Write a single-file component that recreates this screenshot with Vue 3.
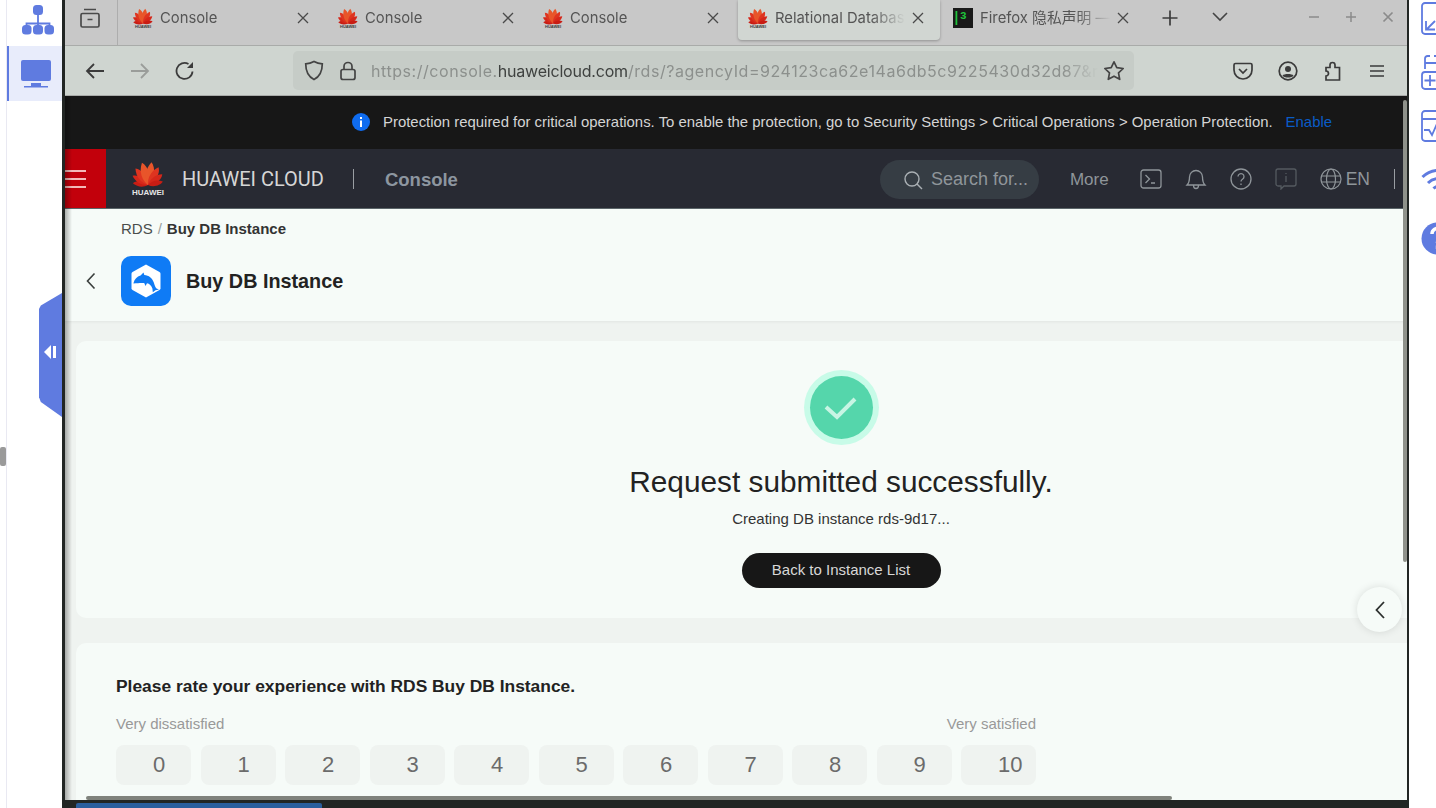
<template>
  <div class="desktop">
    <!-- left rail -->
    <aside class="rail-left">
      <div class="rail-strip"><span class="strip-thumb"></span></div>
      <div class="rail-items">
        <div class="rail-item org">
          <svg width="34" height="34" viewBox="0 0 34 34" fill="#5f7be0">
            <rect x="12" y="2" width="10" height="10" rx="3.500" />
            <path d="M17 11v11M5.500 24v-3.500h23V24" fill="none" stroke="#5f7be0" stroke-width="1.800" />
            <rect x="1" y="22" width="9.500" height="9.500" rx="3.500" />
            <rect x="12" y="22" width="10" height="9.500" rx="3.500" />
            <rect x="23.500" y="22" width="9.500" height="9.500" rx="3.500" />
          </svg>
        </div>
        <div class="rail-item active">
          <svg width="32" height="30" viewBox="0 0 32 30" fill="#5f7be0">
            <rect x="1" y="1" width="30" height="21" rx="2" />
            <rect x="11" y="24" width="10" height="3" />
            <rect x="4" y="27" width="24" height="1.500" />
          </svg>
        </div>
      </div>
    </aside>
    <div class="handle">
      <svg width="12" height="14" viewBox="0 0 12 14" fill="#fff">
        <path d="M7 0v14L0 7z" />
        <rect x="9" y="1" width="3" height="12" />
      </svg>
    </div>

    <!-- browser -->
    <div class="center">
      <div class="window">
        <div class="tabbar">
          <div class="archive">
            <svg width="22" height="22" viewBox="0 0 22 22" fill="none" stroke="#4a4a4a" stroke-width="1.700">
              <path d="M5 2.500h12M3.500 6.500h15A1.500 1.500 0 0 1 20 8v10.500a1.500 1.500 0 0 1-1.500 1.500h-15A1.500 1.500 0 0 1 2 18.500V8a1.500 1.500 0 0 1 1.500-1.500zM8.500 12.500h5" />
            </svg>
          </div>
          <div v-for="tab in tabs" :key="tab.key" class="tab" :class="{ selected: tab.active }">
            <svg v-if="tab.fox" class="favicon" width="20" height="20" viewBox="0 0 20 20">
              <rect width="20" height="20" fill="#1a1a1a" />
              <rect x="2.500" y="3" width="1.800" height="14" fill="#1fc23b" />
              <text x="7" y="11" font-size="11" font-weight="700" fill="#1fc23b" font-family="Liberation Mono, monospace">3</text>
            </svg>
            <div v-else class="favicon logo-small">
              <svg width="22" height="16.500" viewBox="0 0 40 30">
                <path v-for="p in petals" :key="p.a" :d="petalPath" :fill="p.c" :transform="`translate(20 28) rotate(${p.a}) scale(${p.s})`" />
              </svg>
              <span class="logo-small-text">HUAWEI</span>
            </div>
            <span class="tab-title">{{ tab.title }}</span>
            <svg class="tab-close" width="14" height="14" viewBox="0 0 14 14" stroke="#4a4a4a" stroke-width="1.300">
              <path d="M2 2l10 10M12 2L2 12" />
            </svg>
          </div>
          <svg class="tab-new" width="18" height="18" viewBox="0 0 18 18" stroke="#3c3c3c" stroke-width="1.700">
            <path d="M9 1.500v15M1.500 9h15" />
          </svg>
          <svg class="tab-list" width="18" height="12" viewBox="0 0 18 12" fill="none" stroke="#444" stroke-width="1.600">
            <path d="M2 2l7 7 7-7" />
          </svg>
          <div class="win-buttons">
            <svg width="12" height="12" viewBox="0 0 12 12" stroke="#8b8b8b" stroke-width="1.500"><path d="M1 6h10" /></svg>
            <svg width="12" height="12" viewBox="0 0 12 12" stroke="#8b8b8b" stroke-width="1.500"><path d="M1 6h10M6 1v10" /></svg>
            <svg width="12" height="12" viewBox="0 0 12 12" stroke="#8b8b8b" stroke-width="1.700"><path d="M1.500 1.500l9 9M10.500 1.500l-9 9" /></svg>
          </div>
        </div>

        <div class="toolbar">
          <div class="tool">
            <svg width="20" height="18" viewBox="0 0 20 18" fill="none" stroke="#3b3b3b" stroke-width="1.800"><path d="M19 9H2M9 2L2 9l7 7" /></svg>
          </div>
          <div class="tool">
            <svg width="20" height="18" viewBox="0 0 20 18" fill="none" stroke="#9a9d9a" stroke-width="1.800"><path d="M1 9h17M11 2l7 7-7 7" /></svg>
          </div>
          <div class="tool">
            <svg width="20" height="20" viewBox="0 0 20 20" fill="none" stroke="#3b3b3b" stroke-width="1.800">
              <path d="M17.500 10.500A8 8 0 1 1 13.500 3" />
              <path d="M18 1v6h-6z" fill="#3b3b3b" stroke="none" />
            </svg>
          </div>
          <div class="urlbar">
            <svg class="shield" width="20" height="21" viewBox="0 0 20 21" fill="none" stroke="#444" stroke-width="1.700">
              <path d="M10 1.500c3 1.700 5.500 2.200 8.300 2.300 0 7.500-2.300 12.800-8.300 15.700C4 16.600 1.700 11.300 1.700 3.800 4.500 3.700 7 3.200 10 1.500z" />
            </svg>
            <svg class="lock" width="16" height="20" viewBox="0 0 16 20" fill="none" stroke="#444" stroke-width="1.700">
              <rect x="1" y="8.500" width="14" height="10" rx="2" />
              <path d="M4 8.500V5.500a4 4 0 0 1 8 0v3" />
            </svg>
            <div class="url"><span class="url-dim">https://console.</span><span class="url-host">huaweicloud.com</span><span class="url-dim">/rds/?agencyId=924123ca62e14a6db5c9225430d32d87&amp;region=cn</span></div>
            <svg class="star" width="22" height="21" viewBox="0 0 22 21" fill="none" stroke="#444" stroke-width="1.700" stroke-linejoin="round">
              <path d="M11 1.800l2.800 5.900 6.400.8-4.700 4.400 1.200 6.400L11 16.200l-5.700 3.100 1.200-6.400L1.800 8.500l6.400-.8z" />
            </svg>
          </div>
          <div class="tool first-right">
            <svg width="20" height="18" viewBox="0 0 20 18" fill="none" stroke="#3b3b3b" stroke-width="1.700">
              <path d="M2.500 1.500h15a1.500 1.500 0 0 1 1.500 1.500v5a9 9 0 0 1-18 0V3a1.500 1.500 0 0 1 1.500-1.500zM6 7l4 4 4-4" />
            </svg>
          </div>
          <div class="tool">
            <svg width="20" height="20" viewBox="0 0 20 20" fill="none" stroke="#3b3b3b" stroke-width="1.700">
              <circle cx="10" cy="10" r="8.800" />
              <circle cx="10" cy="8" r="3" fill="#3b3b3b" stroke="none" />
              <path d="M4.500 14.500c1.500-2 9.500-2 11 0-1.500 2.700-9.500 2.700-11 0z" fill="#3b3b3b" stroke="none" />
            </svg>
          </div>
          <div class="tool">
            <svg width="20" height="20" viewBox="0 0 20 20" fill="none" stroke="#3b3b3b" stroke-width="1.700">
              <path d="M3 6.500h4V4a2.500 2.500 0 0 1 5 0v2.500h4.500V19H3v-4a2.500 2.500 0 0 0 0-5z" />
            </svg>
          </div>
          <div class="tool menu-tool">
            <svg width="18" height="14" viewBox="0 0 18 14" stroke="#3b3b3b" stroke-width="1.600"><path d="M2 2h14M2 7h14M2 12h14" /></svg>
          </div>
        </div>

        <div class="page">
          <div class="banner">
            <svg width="18" height="18" viewBox="0 0 18 18">
              <circle cx="9" cy="9" r="9" fill="#0f6cf0" />
              <rect x="8" y="7.500" width="2" height="6.500" fill="#fff" />
              <rect x="8" y="4" width="2" height="2" fill="#fff" />
            </svg>
            <span class="banner-text">Protection required for critical operations. To enable the protection, go to Security Settings &gt; Critical Operations &gt; Operation Protection.</span>
            <span class="banner-link">Enable</span>
          </div>

          <header class="topnav">
            <div class="menu-block">
              <svg width="22" height="18" viewBox="0 0 22 18" stroke="#f3b8b8" stroke-width="1.800"><path d="M0 1h21M0 9h21M0 17h21" /></svg>
            </div>
            <div class="logo">
              <svg width="34" height="26" viewBox="0 0 40 30">
                <path v-for="p in petals" :key="p.a" :d="petalPath" :fill="p.c" :transform="`translate(20 28) rotate(${p.a}) scale(${p.s})`" />
              </svg>
              <span class="logo-text">HUAWEI</span>
            </div>
            <span class="brand">HUAWEI CLOUD</span>
            <span class="nav-divider first"></span>
            <span class="console">Console</span>
            <div class="search">
              <svg width="20" height="20" viewBox="0 0 20 20" fill="none" stroke="#aab0b4" stroke-width="1.400">
                <circle cx="9" cy="9" r="7" /><path d="M14 14l5 5" />
              </svg>
              <span>Search for...</span>
            </div>
            <span class="more">More</span>
            <svg class="nav-icon terminal" width="22" height="20" viewBox="0 0 22 20" fill="none" stroke="#8f959a" stroke-width="1.300">
              <rect x="1" y="1" width="20" height="18" rx="2.500" />
              <path d="M5.500 6l4 4-4 4M11 14h4" />
            </svg>
            <svg class="nav-icon" width="22" height="23" viewBox="0 0 22 23" fill="none" stroke="#8f959a" stroke-width="1.300">
              <path d="M2 18c2-2 2.500-4 2.500-8a6.500 6.500 0 0 1 13 0c0 4 .5 6 2.500 8zM8.500 18.500c0 4 5 4 5 0" />
            </svg>
            <svg class="nav-icon" width="22" height="22" viewBox="0 0 22 22" fill="none" stroke="#8f959a" stroke-width="1.300">
              <circle cx="11" cy="11" r="10" />
              <path d="M8 8.500a3 3 0 1 1 4.500 2.700c-1 .6-1.500 1-1.500 2.300M11 15.500v1.500" />
            </svg>
            <svg class="nav-icon" width="22" height="22" viewBox="0 0 22 22" fill="none" stroke="#545a60" stroke-width="1.300">
              <path d="M3 1h16a2 2 0 0 1 2 2v13a2 2 0 0 1-2 2H9l-3 3v-3H3a2 2 0 0 1-2-2V3a2 2 0 0 1 2-2zM11 5v1M11 8v6" />
            </svg>
            <svg class="nav-icon globe" width="22" height="22" viewBox="0 0 22 22" fill="none" stroke="#8f959a" stroke-width="1.200">
              <circle cx="11" cy="11" r="10" />
              <ellipse cx="11" cy="11" rx="4.500" ry="10" />
              <path d="M1.500 8h19M1.500 14h19" />
            </svg>
            <span class="lang">EN</span>
            <span class="nav-divider last"></span>
          </header>

          <section class="subhead">
            <div class="crumbs"><span>RDS</span><i>/</i><b>Buy DB Instance</b></div>
            <div class="title-row">
              <svg class="back" width="12" height="18" viewBox="0 0 12 18" fill="none" stroke="#3a3f3d" stroke-width="1.600"><path d="M9.500 1.500L2.500 9l7 7.500" /></svg>
              <svg width="50" height="50" viewBox="0 0 50 50">
                <rect width="50" height="50" rx="10" fill="#0f7bf5" />
                <path d="M25 8.500l13.500 7.500a2 2 0 0 1 1 1.700v14.600a2 2 0 0 1-1 1.700L25 41.500 11.500 34a2 2 0 0 1-1-1.700V17.700a2 2 0 0 1 1-1.700z" fill="#fff" />
                <path d="M12.500 27c1-4 3.500-6.500 7-7.500l3-3 .8 2.500c4.500.3 8 3 9.500 7.500.8 2.400 1.200 4.300 2.700 6l2.500 1-3.500.7-2.700 2-.4-3.700c-1-3-3-4.700-5.400-5.200l-1.500 2.700-1.300-2.900c-3.500-.3-6.500.2-10.700.4z" fill="#0f7bf5" />
              </svg>
              <h1>Buy DB Instance</h1>
            </div>
          </section>

          <main class="body">
            <section class="card result">
              <div class="check-outer">
                <div class="check-inner">
                  <svg width="34" height="26" viewBox="0 0 34 26" fill="none" stroke="#c8f5e4" stroke-width="4"><path d="M2 12l11 10L31 4" /></svg>
                </div>
              </div>
              <h2>Request submitted successfully.</h2>
              <p>Creating DB instance rds-9d17...</p>
              <button class="back-btn">Back to Instance List</button>
            </section>
            <section class="card rating">
              <h3>Please rate your experience with RDS Buy DB Instance.</h3>
              <div class="rate-box">
                <div class="rate-labels"><span>Very dissatisfied</span><span>Very satisfied</span></div>
                <div class="scores">
                  <div v-for="n in 11" :key="n" class="score">{{ n - 1 }}</div>
                </div>
              </div>
            </section>
          </main>

          <div class="vignette"></div>
          <div class="float-btn">
            <svg width="12" height="20" viewBox="0 0 12 20" fill="none" stroke="#2c2f2e" stroke-width="1.800"><path d="M10 2L2.500 10l7.500 8" /></svg>
          </div>
          <div class="scroll-v"></div>
          <div class="scroll-h"></div>
        </div>
      </div>
      <div class="task-strip"><span class="task-active"></span></div>
    </div>

    <!-- right rail, cut off by the screen edge -->
    <aside class="rail-right">
      <svg width="32" height="33" viewBox="0 0 32 33" fill="none" stroke="#5f7be0" stroke-width="1.800">
        <rect x="1" y="1" width="34" height="31" rx="3" />
        <path d="M14 19l-8 8M5 19v8.500h9" />
      </svg>
      <svg width="32" height="35" viewBox="0 0 32 35" fill="none" stroke="#5f7be0" stroke-width="1.800">
        <path d="M4 14V3.500A2.500 2.500 0 0 1 6.500 1H9M13 1h12M4 8h26" />
        <rect x="1" y="17" width="34" height="17" rx="3" />
        <path d="M9 20v11M3.500 25.500h11" />
      </svg>
      <svg width="32" height="32" viewBox="0 0 32 32" fill="none" stroke="#5f7be0" stroke-width="1.800">
        <rect x="1" y="1" width="34" height="30" rx="3" />
        <path d="M1 9h34M3 20h5l3 5 4-9 3 5h14" />
      </svg>
      <svg class="wifi" width="32" height="28" viewBox="0 0 32 28" fill="none" stroke="#5f7be0" stroke-width="3">
        <path d="M1.500 10c9-9 24-9 33 0M7 16c6-6 16-6 22 0M12.500 21.500c3-3 8-3 11 0" />
      </svg>
      <svg class="help" width="32" height="33" viewBox="0 0 32 33">
        <circle cx="16.500" cy="16.500" r="16" fill="#5f7be0" />
        <path d="M11 12a5.500 5.500 0 1 1 8.500 4.500c-2 1.300-3 2-3 4.500" fill="none" stroke="#fff" stroke-width="3.500" />
        <rect x="14.800" y="23.500" width="3.500" height="3.500" fill="#fff" />
      </svg>
    </aside>
  </div>
</template>

<script setup>
// 标签页
const tabs = [
  { key: 1, title: 'Console' },
  { key: 2, title: 'Console' },
  { key: 3, title: 'Console' },
  { key: 4, title: 'Relational Database Service', active: true },
  { key: 5, title: 'Firefox 隐私声明 — Firefox', fox: true },
]

// 华为花瓣，原点在花心
const petalPath = 'M0 0C-6-7-8-17-2.500-27 4-22 6-9 0 0z'
const petals = [
  { a: -78, s: 0.66, c: '#c81d14' },
  { a: -54, s: 0.78, c: '#d5271a' },
  { a: -32, s: 0.9, c: '#de3420' },
  { a: -10, s: 1, c: '#e8552a' },
  { a: 14, s: 1, c: '#e8552a' },
  { a: 36, s: 0.9, c: '#de3420' },
  { a: 58, s: 0.78, c: '#d5271a' },
  { a: 82, s: 0.66, c: '#c81d14' },
]
</script>

<style>
html,
body {
  margin: 0;
  background: #fff;
  overflow: hidden;
}
</style>

<style scoped>
.desktop {
  width: 1436px;
  height: 808px;
  display: flex;
  position: relative;
  overflow: hidden;
  font-family: 'Liberation Sans', 'Noto Sans CJK SC', sans-serif;
}

.rail-left {
  width: 62px;
  flex: none;
  display: flex;
  background: #fff;
}

.rail-strip {
  width: 6px;
  border-right: 1px solid #e9e9f2;
  position: relative;
}

.strip-thumb {
  position: absolute;
  left: 0;
  top: 447px;
  width: 6px;
  height: 19px;
  background: #9a9a9a;
  border-radius: 2px;
}

.rail-items {
  flex: 1;
}

.rail-item {
  height: 46px;
  display: flex;
  align-items: center;
  justify-content: center;
  box-sizing: border-box;
}

.rail-item.org {
  padding: 0 0 6px 6px;
}

.rail-item.active {
  height: 55px;
  background: #e8ecfb;
  border-left: 2px solid #5f7be0;
}

.handle {
  position: absolute;
  left: 39px;
  top: 293px;
  width: 23px;
  height: 124px;
  padding: 0 2px 6px 0;
  box-sizing: border-box;
  background: #5f7be0;
  clip-path: polygon(100% 0, 100% 100%, 8% 88%, 0 84%, 0 13%, 8% 10%);
  display: flex;
  align-items: center;
  justify-content: center;
}

.center {
  width: 1347px;
  flex: none;
  background: #222624;
  padding: 0 2px 0 3px;
  box-sizing: border-box;
}

.window {
  height: 800px;
  display: flex;
  flex-direction: column;
  overflow: hidden;
}

.tabbar {
  height: 45px;
  flex: none;
  display: flex;
  align-items: flex-start;
  background: #c8c8c8;
  border-bottom: 1px solid #a9aba9;
  box-sizing: content-box;
  font-family: Inter, 'Noto Sans CJK SC', sans-serif;
}

.archive {
  width: 50px;
  height: 36px;
  padding: 0 2px 9px 0;
  border-right: 1px solid #adadad;
  box-sizing: content-box;
  display: flex;
  align-items: center;
  justify-content: center;
  flex: none;
}

.tab {
  width: 202px;
  height: 40px;
  margin-right: 3px;
  flex: none;
  display: flex;
  align-items: center;
  padding: 0 10px 4px;
  box-sizing: border-box;
}

.archive + .tab {
  margin-left: 5px;
}

.tab.selected {
  background: #d1d6d2;
  border-radius: 0 0 4px 4px;
  box-shadow: 0 1px 3px rgba(0, 0, 0, 0.28);
}

.favicon {
  flex: none;
}

.logo-small {
  width: 20px;
  height: 20px;
  display: flex;
  flex-direction: column;
  align-items: center;
}

.logo-small svg {
  flex: none;
  margin: 0 -1px;
}

.logo-small-text {
  font-family: 'Liberation Sans', sans-serif;
  font-size: 4px;
  line-height: 4px;
  font-weight: 700;
  color: #3a3a3a;
}

.tab-title {
  margin-left: 7px;
  width: 133px;
  flex: none;
  font-size: 14.800px;
  line-height: 20px;
  color: #555;
  white-space: nowrap;
  overflow: hidden;
  mask-image: linear-gradient(to right, #000 72%, transparent 98%);
}

.tab-close {
  margin-left: 3px;
  flex: none;
}

.tab-new {
  margin: 9px 0 0 13px;
  flex: none;
}

.tab-list {
  margin: 11px 0 0 32px;
  flex: none;
}

.win-buttons {
  margin: 11px 0 0 79px;
  display: flex;
  gap: 25px;
}

.toolbar {
  height: 49px;
  flex: none;
  display: flex;
  align-items: center;
  padding-left: 7px;
  background: #cfd5d0;
  border-bottom: 1px solid #a9aba9;
}

.tool {
  width: 45px;
  flex: none;
  display: flex;
  align-items: center;
  justify-content: center;
}

.tool.first-right {
  margin-left: 86px;
}

.tool.menu-tool {
  margin-left: -1px;
}

.urlbar {
  margin-left: 86px;
  width: 841px;
  height: 39px;
  flex: none;
  display: flex;
  align-items: center;
  padding-left: 11px;
  box-sizing: border-box;
  background: #c6ccc7;
  border-radius: 5px;
  font-family: Inter, sans-serif;
}

.lock {
  margin-left: 16px;
  flex: none;
}

.shield,
.star {
  flex: none;
}

.url {
  margin-left: 15px;
  width: 727px;
  flex: none;
  font-size: 16px;
  white-space: nowrap;
  overflow: hidden;
  mask-image: linear-gradient(to right, #000 95%, transparent 100%);
}

.star {
  margin-left: 5px;
}

.url-dim {
  color: #8c908d;
  letter-spacing: 0.550px;
}

.url-host {
  color: #3f4240;
  letter-spacing: -0.200px;
}

.page {
  flex: 1;
  min-height: 0;
  position: relative;
  overflow: hidden;
  background: #eff3f0;
}

.banner {
  height: 53px;
  display: flex;
  align-items: center;
  padding: 0 0 2px 287px;
  background: #171717;
  font-size: 14.920px;
  box-sizing: border-box;
}

.banner-text {
  margin-left: 13px;
  color: #d4d4d4;
  white-space: nowrap;
}

.banner-link {
  margin-left: 13px;
  color: #0a5cc8;
}

.topnav {
  height: 60px;
  display: flex;
  align-items: center;
  background: #282a33;
  border-bottom: 1px solid #5c666a;
  box-sizing: border-box;
}

.menu-block {
  width: 41px;
  height: 100%;
  flex: none;
  background: #c2000b;
  display: flex;
  align-items: center;
}

.logo {
  margin-left: 25px;
  width: 34px;
  flex: none;
  display: flex;
  flex-direction: column;
  align-items: center;
}

.logo-text {
  font-size: 8px;
  line-height: 9px;
  font-weight: 700;
  color: #e5e5e5;
  margin-top: 1px;
}

.brand {
  margin-left: 17px;
  font-family: Roboto, sans-serif;
  font-size: 20px;
  color: #d6d6d6;
  white-space: nowrap;
}

.nav-divider {
  width: 1px;
  height: 20px;
  flex: none;
  background: #9a9ea3;
}

.nav-divider.first {
  margin-left: 29px;
}

.nav-divider.last {
  margin-left: 24px;
  margin-right: 12px;
}

.console {
  margin: 3px 0 0 31px;
  font-size: 18.500px;
  font-weight: 700;
  color: #8d96a0;
}

.search {
  margin: 2px 0 0 auto;
  width: 159px;
  height: 39px;
  flex: none;
  display: flex;
  align-items: center;
  gap: 8px;
  padding-left: 23px;
  box-sizing: border-box;
  background: #363d44;
  border-radius: 20px;
  font-size: 18px;
  color: #8f959a;
  white-space: nowrap;
}

.more {
  margin: 2px 31px 0;
  font-size: 17px;
  color: #8f959a;
}

.nav-icon {
  margin-right: 23px;
  flex: none;
}

.nav-icon.globe {
  margin-right: 4px;
}

.lang {
  margin-top: 2px;
  font-size: 17.500px;
  color: #8f959a;
}

.subhead {
  height: 112px;
  padding: 10px 0 0 56px;
  box-sizing: border-box;
  background: #f6fbf8;
  box-shadow: 0 1px 3px rgba(0, 0, 0, 0.06);
  position: relative;
}

.crumbs {
  font-size: 15px;
  line-height: 20px;
  color: #4a4e4c;
}

.crumbs i {
  font-style: normal;
  margin: 0 5px;
  color: #9a9e9c;
}

.crumbs b {
  color: #333;
}

.title-row {
  margin-top: 17px;
  display: flex;
  align-items: center;
  position: relative;
}

.back {
  position: absolute;
  left: -36px;
  top: 16px;
}

.title-row h1 {
  margin: 0 0 0 15px;
  font-size: 19.800px;
  font-weight: 700;
  color: #222;
}

.body {
  padding: 20px 0 0 11px;
}

.card {
  width: 1530px;
  background: #f6fbf8;
  border-radius: 10px;
}

.result {
  height: 277px;
  display: flex;
  flex-direction: column;
  align-items: center;
  padding-top: 29px;
  box-sizing: border-box;
}

.check-outer {
  width: 75px;
  height: 75px;
  border-radius: 50%;
  background: #c8fbe8;
  display: flex;
  align-items: center;
  justify-content: center;
}

.check-inner {
  width: 63px;
  height: 63px;
  border-radius: 50%;
  background: #55d6ab;
  display: flex;
  align-items: center;
  justify-content: center;
}

.result h2 {
  margin: 17px 0 0;
  font-size: 29.800px;
  line-height: 40px;
  font-weight: 400;
  color: #222;
}

.result p {
  margin: 7px 0 0;
  font-size: 15px;
  line-height: 20px;
  color: #333;
}

.back-btn {
  margin-top: 24px;
  width: 199px;
  height: 35px;
  padding: 0 0 2px;
  border: none;
  border-radius: 18px;
  background: #171717;
  color: #d8d8d8;
  font-family: inherit;
  font-size: 15px;
}

.rating {
  margin-top: 25px;
  padding: 32px 0 40px 40px;
  box-sizing: border-box;
}

.rating h3 {
  margin: 0;
  font-size: 17.400px;
  line-height: 22px;
  font-weight: 700;
  color: #222;
}

.rate-box {
  width: 920px;
  margin-top: 17px;
}

.rate-labels {
  display: flex;
  justify-content: space-between;
  font-size: 15px;
  line-height: 20px;
  color: #999;
}

.scores {
  margin-top: 11px;
  display: grid;
  grid-template-columns: repeat(11, 1fr);
  gap: 9.500px;
}

.score {
  height: 40px;
  padding-left: 37px;
  box-sizing: border-box;
  border-radius: 8px;
  background: #eff3f0;
  color: #6b6b6b;
  font-size: 22px;
  line-height: 40px;
}

.vignette {
  position: absolute;
  left: 0;
  top: 0;
  bottom: 0;
  width: 7px;
  background: linear-gradient(to right, rgba(0, 0, 0, 0.3), rgba(0, 0, 0, 0));
}

.float-btn {
  position: absolute;
  left: 1292px;
  top: 491px;
  width: 45px;
  height: 45px;
  border-radius: 50%;
  background: #f6fbf8;
  box-shadow: 0 0 8px rgba(0, 0, 0, 0.12);
  display: flex;
  align-items: center;
  justify-content: center;
}

.scroll-v {
  position: absolute;
  right: 0;
  top: 4px;
  width: 4px;
  height: 462px;
  background: #8f928b;
  border-radius: 2px;
}

.scroll-h {
  position: absolute;
  left: 21px;
  bottom: 0;
  width: 1086px;
  height: 4px;
  background: #7f827c;
  border-radius: 2px;
}

.task-strip {
  height: 8px;
  position: relative;
}

.task-active {
  position: absolute;
  left: 11px;
  top: 3px;
  width: 246px;
  height: 5px;
  background: #2a5f9e;
  border-radius: 2px 2px 0 0;
}

.rail-right {
  flex: 1;
  min-width: 0;
  overflow: hidden;
  display: flex;
  flex-direction: column;
  align-items: flex-start;
  gap: 20px;
  padding: 2px 0 0 12px;
  background: #fff;
}

.rail-right svg {
  flex: none;
}

.rail-right .wifi {
  margin-top: 5px;
}

.rail-right .help {
  margin-top: 7px;
}
</style>
